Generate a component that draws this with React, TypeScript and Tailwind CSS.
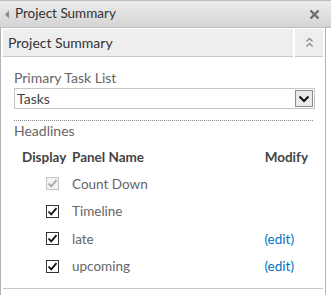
const rows = [
  { name: 'Count Down', disabled: true, edit: false },
  { name: 'Timeline', disabled: false, edit: false },
  { name: 'late', disabled: false, edit: true },
  { name: 'upcoming', disabled: false, edit: true },
]

function Check({ disabled }: { disabled: boolean }) {
  return (
    <span
      className={
        'flex h-[13px] w-[13px] items-center justify-center border ' +
        (disabled ? 'border-[#c4c4c4] bg-[#f2f2f2]' : 'border-[#333] bg-white')
      }
    >
      <svg width="11" height="11" viewBox="0 0 11 11">
        <path
          d="M1.5 5.5 L4.2 8.3 L9.5 2.2"
          fill="none"
          stroke={disabled ? '#a8a8a8' : '#111'}
          strokeWidth="1.8"
        />
      </svg>
    </span>
  )
}

export default function App() {
  return (
    <div
      className="relative h-[295px] w-[331px] overflow-hidden bg-white"
      style={{ fontFamily: 'Lato, "Open Sans", "Liberation Sans", sans-serif' }}
    >
      {/* title bar */}
      <div className="flex h-[28px] items-center border-t border-b border-[#bdbdbd] bg-gradient-to-b from-[#ececec] to-[#d4d4d4] pl-[4px] pr-[11px]">
        <svg width="6" height="9" viewBox="0 0 6 9" className="mr-[5px]">
          <path d="M5 0.5 L1 4.5 L5 8.5 Z" fill="#8a8a8a" />
        </svg>
        <span className="flex-1 text-[13.5px] leading-none text-[#333]">Project Summary</span>
        <svg width="11" height="11" viewBox="0 0 11 11">
          <path d="M1.5 1.5 L9.5 9.5 M9.5 1.5 L1.5 9.5" stroke="#6e6e6e" strokeWidth="2.4" />
        </svg>
      </div>

      {/* panel */}
      <div className="flex h-[267px] w-[326px] flex-col border-l border-r border-[#b5b5b5] bg-white">
        <div className="mx-[2px] mt-[1px] flex h-[28px] gap-[2px]">
          <div className="flex flex-1 items-center border-b border-[#c9c9c9] bg-[#eeeeee] px-[5px] text-[14px] text-[#333]">
            Project Summary
          </div>
          <div className="flex w-[28px] items-center justify-center border-b border-[#c9c9c9] bg-[#eeeeee]">
            <svg width="9" height="11" viewBox="0 0 9 11">
              <path d="M1.5 4.5 L4.5 1.5 L7.5 4.5 M1.5 9.5 L4.5 6.5 L7.5 9.5" fill="none" stroke="#8a8a8a" strokeWidth="1.3" />
            </svg>
          </div>
        </div>

        <div className="flex flex-1 flex-col px-[13px]">
          <div className="mt-[12px] text-[14px] leading-[18px] text-[#666]">Primary Task List</div>
          <div className="mt-[1px] flex h-[21px] w-[301px] items-center border border-[#c6c6c6] pl-[2px]">
            <span className="flex-1 text-[14px] text-[#444]">Tasks</span>
            <span className="mr-[1px] flex h-[17px] w-[18px] items-center justify-center border border-[#8c8c8c] bg-[#eaeaea]">
              <svg width="12" height="8" viewBox="0 0 12 8">
                <path d="M1.5 1.5 L6 6 L10.5 1.5" fill="none" stroke="#111" strokeWidth="2" />
              </svg>
            </span>
          </div>
          <div className="mt-[11px] w-[299px] border-t border-dotted border-[#8a8a8a]" />
          <div className="mt-[1px] text-[14px] leading-[18px] text-[#666]">Headlines</div>

          <div className="mt-[8px] flex h-[18px] items-center pl-[8px] pr-[4px] text-[13.5px] font-bold text-[#444]">
            <span className="w-[50px]">Display</span>
            <span className="flex-1">Panel Name</span>
            <span>Modify</span>
          </div>

          <div className="mt-[4px] flex flex-col">
            {rows.map((r) => (
              <div key={r.name} className="flex h-[27.5px] items-center pr-[18px] text-[13.5px]">
                <span className="flex w-[58px] justify-end pr-[13px]">
                  <Check disabled={r.disabled} />
                </span>
                <span className="flex-1 text-[#666]">{r.name}</span>
                {r.edit && <span className="text-[#0072c6]">(edit)</span>}
              </div>
            ))}
          </div>
        </div>

        <div className="mx-[2px] mb-[6px] border-b border-[#c6c6c6]" />
      </div>
    </div>
  )
}
